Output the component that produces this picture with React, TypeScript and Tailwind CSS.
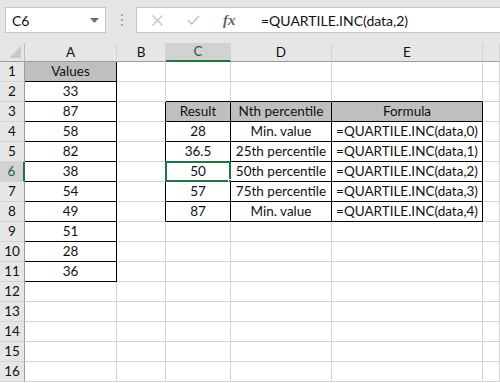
import React from "react";

const cols = [
  { name: "", w: "w-[25px]" },
  { name: "A", w: "w-[92px]" },
  { name: "B", w: "w-[49px]" },
  { name: "C", w: "w-[65px]" },
  { name: "D", w: "w-[101px]" },
  { name: "E", w: "w-[151px]" },
  { name: "", w: "w-[17px]" },
];

const cells: Record<string, string> = {
  "1-1": "Values",
  "2-1": "33",
  "3-1": "87",
  "4-1": "58",
  "5-1": "82",
  "6-1": "38",
  "7-1": "54",
  "8-1": "49",
  "9-1": "51",
  "10-1": "28",
  "11-1": "36",
  "3-3": "Result",
  "3-4": "Nth percentile",
  "3-5": "Formula",
  "4-3": "28",
  "4-4": "Min. value",
  "4-5": "=QUARTILE.INC(data,0)",
  "5-3": "36.5",
  "5-4": "25th percentile",
  "5-5": "=QUARTILE.INC(data,1)",
  "6-3": "50",
  "6-4": "50th percentile",
  "6-5": "=QUARTILE.INC(data,2)",
  "7-3": "57",
  "7-4": "75th percentile",
  "7-5": "=QUARTILE.INC(data,3)",
  "8-3": "87",
  "8-4": "Min. value",
  "8-5": "=QUARTILE.INC(data,4)",
};

// boxes with black borders: [r1, r2, c1, c2]
const boxes = [
  [1, 11, 1, 1],
  [3, 8, 3, 5],
];
const headerFill = ["1-1", "3-3", "3-4", "3-5"];

const inBox = (r: number, c: number) =>
  boxes.some(([r1, r2, c1, c2]) => r >= r1 && r <= r2 && c >= c1 && c <= c2);

const rows = Array.from({ length: 16 }, (_, i) => i + 1);

function Cell({ r, c }: { r: number; c: number }) {
  const key = `${r}-${c}`;
  const right = inBox(r, c) || inBox(r, c + 1);
  const bottom = inBox(r, c) || inBox(r + 1, c);
  const selected = r === 6 && c === 3;
  return (
    <div
      className={`relative flex h-[20px] shrink-0 items-center justify-center border-b border-r ${cols[c].w} ${right ? "border-r-black" : "border-r-[#d4d4d4]"} ${bottom ? "border-b-black" : "border-b-[#d4d4d4]"} ${headerFill.includes(key) ? "bg-[#bfbfbf]" : "bg-white"}`}
    >
      <span className="whitespace-nowrap">{cells[key] ?? ""}</span>
      {selected && (
        <>
          <div className="absolute left-[-1px] top-[-1px] h-[21px] w-[66px] border-2 border-[#217346]" />
          <div className="absolute bottom-[-4px] right-[-4px] h-[6px] w-[6px] border border-white bg-[#217346]" />
        </>
      )}
    </div>
  );
}

export default function App() {
  return (
    <div
      className="h-[383px] w-[500px] overflow-hidden bg-white text-[13.5px] text-[#111]"
      style={{ fontFamily: "Lato, 'Liberation Sans', sans-serif" }}
    >
      {/* formula bar */}
      <div className="flex h-[43px] items-start bg-[#e6e6e6] pt-[7px]">
        <div className="ml-[5px] flex h-[26px] w-[101px] items-center justify-between border border-[#c6c6c6] bg-white pl-[6px] pr-[6px] text-[14px]">
          <span>C6</span>
          <svg width="9" height="5" viewBox="0 0 9 5">
            <path d="M0 0h9L4.5 5z" fill="#6d6d6d" />
          </svg>
        </div>
        <div className="ml-[15px] mr-[13px] flex h-[26px] flex-col justify-center gap-[3px]">
          <span className="block h-[2px] w-[2px] bg-[#a6a6a6]" />
          <span className="block h-[2px] w-[2px] bg-[#a6a6a6]" />
          <span className="block h-[2px] w-[2px] bg-[#a6a6a6]" />
        </div>
        <div className="flex h-[26px] flex-1 items-center border border-r-0 border-[#c6c6c6] bg-white">
          <div className="flex w-[112px] items-center pl-[15px]">
            <svg width="11" height="11" viewBox="0 0 11 11">
              <path d="M0.5 0.5l10 10M10.5 0.5l-10 10" stroke="#c4c4c4" strokeWidth="1.4" />
            </svg>
            <svg width="13" height="10" viewBox="0 0 13 10" className="ml-[24px]">
              <path d="M0.8 5l4 4L12.2 0.8" stroke="#c4c4c4" strokeWidth="1.6" fill="none" />
            </svg>
            <span
              className="ml-[23px] text-[15px] font-bold italic text-[#666]"
              style={{ fontFamily: "'Liberation Serif', serif" }}
            >
              fx
            </span>
          </div>
          <span className="ml-[12px] text-[14px]">=QUARTILE.INC(data,2)</span>
        </div>
      </div>

      {/* column headers */}
      <div className="flex h-[19px] bg-[#e6e6e6]">
        {cols.map((col, i) => (
          <div
            key={i}
            className={`relative flex shrink-0 items-center justify-center border-b border-r ${col.w} ${i === 0 ? "border-r-[#bdbdbd]" : "border-r-[#d4d4d4]"} ${i === 3 ? "border-b-2 border-b-[#217346] bg-[#d2d2d2] text-[#1e5e3c]" : "border-b-[#9b9b9b]"}`}
          >
            {i === 0 ? (
              <svg width="12" height="12" viewBox="0 0 12 12" className="absolute bottom-[3px] right-[3px]">
                <path d="M12 0v12H0z" fill="#c8c8c8" />
              </svg>
            ) : (
              col.name
            )}
          </div>
        ))}
      </div>

      {/* rows */}
      {rows.map((r) => (
        <div key={r} className="flex">
          <div
            className={`flex h-[20px] w-[25px] shrink-0 items-center justify-center border-b border-b-[#d4d4d4] ${r === 6 ? "border-r-2 border-r-[#217346] bg-[#d2d2d2] text-[#1e5e3c]" : "border-r border-r-[#9b9b9b] bg-[#e6e6e6]"}`}
          >
            {r}
          </div>
          {cols.slice(1).map((_, i) => (
            <Cell key={i} r={r} c={i + 1} />
          ))}
        </div>
      ))}
    </div>
  );
}
